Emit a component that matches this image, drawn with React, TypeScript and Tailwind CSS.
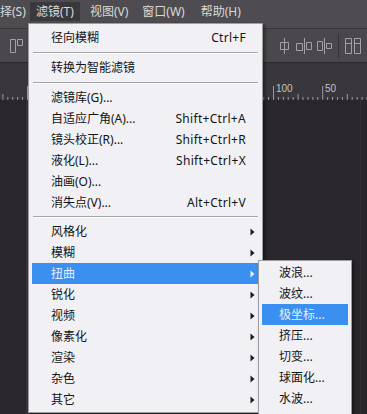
import React from "react";

type Item =
  | { kind: "sep"; h: number }
  | { kind: "item"; label: string; sc?: string; sub?: boolean; active?: boolean };

const items: Item[] = [
  { kind: "item", label: "径向模糊", sc: "Ctrl+F" },
  { kind: "sep", h: 9 },
  { kind: "item", label: "转换为智能滤镜" },
  { kind: "sep", h: 9 },
  { kind: "item", label: "滤镜库(G)..." },
  { kind: "item", label: "自适应广角(A)...", sc: "Shift+Ctrl+A" },
  { kind: "item", label: "镜头校正(R)...", sc: "Shift+Ctrl+R" },
  { kind: "item", label: "液化(L)...", sc: "Shift+Ctrl+X" },
  { kind: "item", label: "油画(O)..." },
  { kind: "item", label: "消失点(V)...", sc: "Alt+Ctrl+V" },
  { kind: "sep", h: 8 },
  { kind: "item", label: "风格化", sub: true },
  { kind: "item", label: "模糊", sub: true },
  { kind: "item", label: "扭曲", sub: true, active: true },
  { kind: "item", label: "锐化", sub: true },
  { kind: "item", label: "视频", sub: true },
  { kind: "item", label: "像素化", sub: true },
  { kind: "item", label: "渲染", sub: true },
  { kind: "item", label: "杂色", sub: true },
  { kind: "item", label: "其它", sub: true },
];

const subItems = [
  { label: "波浪..." },
  { label: "波纹..." },
  { label: "极坐标...", active: true },
  { label: "挤压..." },
  { label: "切变..." },
  { label: "球面化..." },
  { label: "水波..." },
];

function Arrow({ light }: { light?: boolean }) {
  return (
    <svg width="5" height="8" viewBox="0 0 5 8">
      <path d="M0.5 0.5 L4.5 4 L0.5 7.5 Z" fill={light ? "#eef4ff" : "#1a1a1a"} />
    </svg>
  );
}

function Ruler() {
  const ticks: React.ReactNode[] = [];
  const step = 4.92;
  const origin = 273.5;
  for (let i = -60; i <= 20; i++) {
    const x = origin + i * step;
    if (x < -2 || x > 370) continue;
    const m = ((i % 10) + 10) % 10;
    const h = m === 0 ? 14 : m === 5 ? 6 : 3;
    ticks.push(
      <line key={i} x1={x} x2={x} y1={22 - h} y2={22} stroke="#9c9a9f" strokeWidth="1" />
    );
  }
  return (
    <svg width="367" height="22" viewBox="0 0 367 22" className="block">
      {ticks}
      <text x="276" y="14" fontSize="10" fill="#c4c2c6" fontFamily="'Liberation Sans', sans-serif">
        100
      </text>
      <text x="325" y="14" fontSize="10" fill="#c4c2c6" fontFamily="'Liberation Sans', sans-serif">
        50
      </text>
    </svg>
  );
}

function ToolIcon({ d }: { d: string }) {
  return (
    <svg width="20" height="22" viewBox="0 0 20 22" className="block">
      <path d={d} fill="none" stroke="#a3a0a6" strokeWidth="1" />
    </svg>
  );
}

export default function App() {
  return (
    <div
      className="relative w-[367px] h-[414px] overflow-hidden bg-[#2a272c] flex flex-col"
      style={{ fontFamily: "'Noto Sans', 'Noto Sans CJK SC', sans-serif" }}
    >
      {/* menu bar */}
      <div className="h-[28px] bg-[#4f4c51] flex items-start pt-[2px] text-[12px] text-[#d9d8da] shrink-0">
        <div className="h-[19px] flex items-center w-[30px]">择(S)</div>
        <div className="h-[19px] flex items-center px-[6px] bg-[#3b383d]">滤镜(T)</div>
        <div className="h-[19px] flex items-center px-[6px] ml-[4px]">视图(V)</div>
        <div className="h-[19px] flex items-center px-[6px] ml-[2px]">窗口(W)</div>
        <div className="h-[19px] flex items-center px-[6px] ml-[4px]">帮助(H)</div>
      </div>
      <div className="h-px bg-[#39363b] shrink-0" />
      {/* tool options bar */}
      <div className="h-[33px] bg-[#4b484d] flex items-center shrink-0">
        <div className="ml-[6px]">
          <ToolIcon d="M4.5 4.5 H9.5 V17.5 H4.5 Z M11.5 4.5 H16.5 V10.5 H11.5 Z" />
        </div>
        <div className="ml-auto flex items-center">
          <ToolIcon d="M10.5 3 V19 M6.5 7.5 H14.5 V14.5 H6.5 Z" />
          <ToolIcon d="M10.5 3 V19 M2.5 8.5 H8.5 V15.5 H2.5 Z M12.5 7.5 H17.5 V14.5 H12.5 Z" />
          <ToolIcon d="M10.5 3 V19 M3.5 6.5 H8.5 V15.5 H3.5 Z M12.5 8.5 H17.5 V13.5 H12.5 Z" />
          <div className="w-px h-[24px] bg-[#353237] mx-[4px]" />
          <div className="mr-[4px]">
            <ToolIcon d="M2.5 3.5 H8.5 V18.5 H2.5 Z M11.5 3.5 H17.5 V18.5 H11.5 Z M2.5 8.5 H8.5 M11.5 8.5 H17.5" />
          </div>
        </div>
      </div>
      <div className="h-px bg-[#2b282d] shrink-0" />
      <div className="h-[15px] bg-[#3a373c] shrink-0" />
      <div className="h-[22px] bg-[#3a373c] shrink-0 border-b border-[#2e2b30]">
        <Ruler />
      </div>
      <div className="flex-1 flex">
        <div className="w-[26px] bg-[#2a272c]" />
        <div className="w-[2px] bg-[#38353a]" />
        <div className="flex-1" />
        <div className="w-px bg-[#343136] mr-[6px]" />
      </div>

      {/* main dropdown */}
      <div className="absolute left-[28px] top-[23px] w-[235px] bg-[#f1f0f4] border border-[#9e9da2] pt-[3px] pb-[2px] shadow-[2px_2px_3px_rgba(0,0,0,0.45)] text-[12px]">
        {items.map((it, i) =>
          it.kind === "sep" ? (
            <div key={i} className="mx-[4px] flex flex-col justify-center" style={{ height: it.h }}>
              <div className="h-px bg-[#a7a5ab]" />
              <div className="h-px bg-[#ffffff]" />
            </div>
          ) : (
            <div
              key={i}
              className={
                "mx-[3px] h-[21px] flex items-center pl-[19px] " +
                (it.active ? "bg-[#3a8ff0] text-[#e6efff]" : "text-[#141414]")
              }
            >
              <span className="flex-1 whitespace-nowrap">{it.label}</span>
              {it.sc && <span className="whitespace-nowrap tracking-[0.3px]">{it.sc}</span>}
              <span className="w-[13px] flex justify-center">
                {it.sub && <Arrow light={it.active} />}
              </span>
            </div>
          )
        )}
      </div>

      {/* submenu */}
      <div className="absolute left-[258px] top-[260px] w-[94px] bg-[#f1f0f4] border border-[#9e9da2] pt-[1px] shadow-[2px_2px_3px_rgba(0,0,0,0.45)] text-[12px]">
        {subItems.map((s, i) => (
          <div
            key={i}
            className={
              "mx-[3px] h-[21px] flex items-center pl-[17px] whitespace-nowrap " +
              (s.active ? "bg-[#3a8ff0] text-[#e6efff]" : "text-[#141414]")
            }
          >
            {s.label}
          </div>
        ))}
        <div className="h-[10px]" />
      </div>
    </div>
  );
}
